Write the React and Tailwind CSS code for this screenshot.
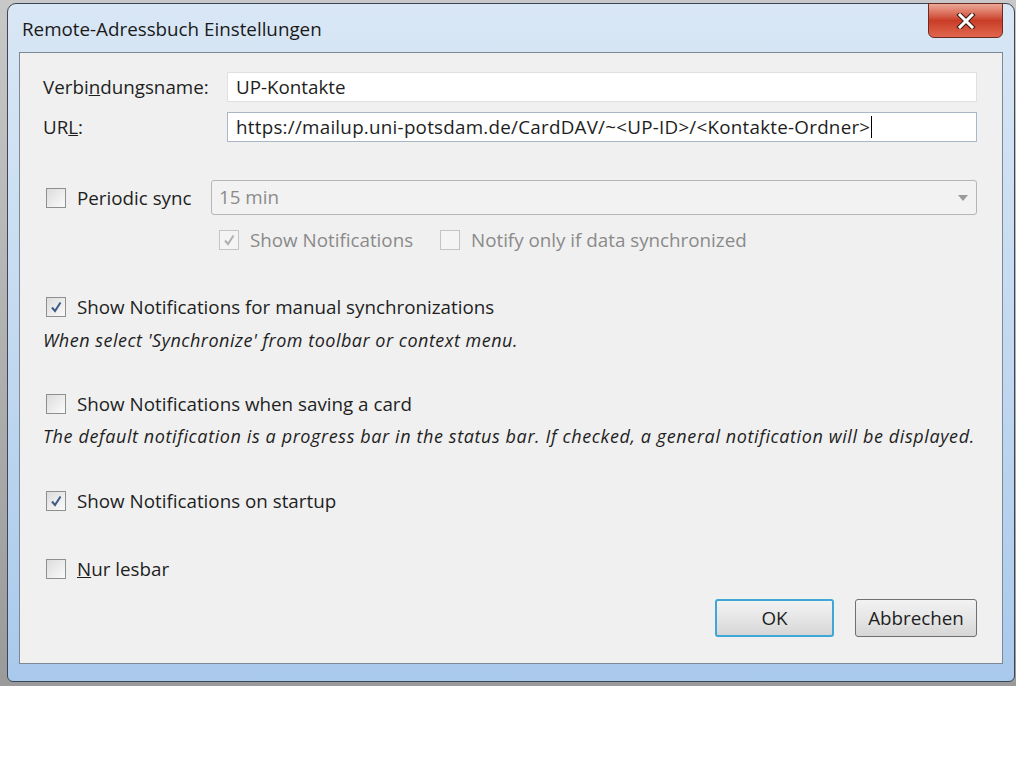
import React from 'react';

const font = { fontFamily: '"Open Sans", "Noto Sans", sans-serif' };

function Checkbox({ checked, disabled }) {
  return (
    <span
      className={`w-[20px] h-[20px] shrink-0 flex items-center justify-center border ${
        disabled ? 'border-[#c4c4c4] bg-[#f4f4f4]' : 'border-[#8e8f8f] bg-gradient-to-br from-[#dcdcdc] to-[#fbfbfb]'
      }`}
    >
      {checked && (
        <svg width="14" height="14" viewBox="0 0 14 14">
          <path
            d="M3 7.5 L6 11 L11.5 2.5"
            fill="none"
            stroke={disabled ? '#b0b0b0' : '#3f5a85'}
            strokeWidth="2"
          />
        </svg>
      )}
    </span>
  );
}

function CheckRow({ checked, disabled, children, className = '' }) {
  return (
    <div className={`flex items-center ${className}`}>
      <Checkbox checked={checked} disabled={disabled} />
      <span className={`ml-[11px] text-[18.8px] leading-[24px] ${disabled ? 'text-[#8a8a8a]' : 'text-[#1e1e1e]'}`}>
        {children}
      </span>
    </div>
  );
}

export default function App() {
  return (
    <div className="w-[1024px] h-[768px] bg-white" style={font}>
      <div className="w-[1016px] h-[686px] bg-gradient-to-b from-[#c8c8c8] to-[#9a9a9a] pl-[7px] pt-[3px]">
        <div className="w-[1008px] h-[679px] rounded-t-[9px] rounded-b-[6px] border border-[#3c4654] bg-gradient-to-b from-[#d9e7f5] via-[#c3d9f0] to-[#a9c9ec] flex flex-col px-[11px] pb-[17px] relative">
          {/* title bar */}
          <div className="h-[48px] flex items-center shrink-0">
            <span className="ml-[3px] mt-[3px] text-[18.8px] text-[#1a1a1a]">Remote-Adressbuch Einstellungen</span>
          </div>
          <div className="absolute top-[-1px] right-[11px] w-[75px] h-[35px] rounded-b-[6px] border border-[#6b2a22] bg-gradient-to-b from-[#eba898] via-[#c93c26] to-[#e0664d] flex items-center justify-center">
            <svg width="20" height="16" viewBox="0 0 20 16">
              <path d="M4 2 L16 14 M16 2 L4 14" stroke="#3a1a14" strokeWidth="5" strokeLinecap="square" />
              <path d="M4 2 L16 14 M16 2 L4 14" stroke="#ffffff" strokeWidth="3" strokeLinecap="square" />
            </svg>
          </div>

          {/* content panel */}
          <div className="flex-1 border border-[#7c8896] bg-[#f0f0f0] pl-[23px] pr-[25px] pt-[19px] flex flex-col">
            <div className="flex items-center h-[30px]">
              <span className="w-[184px] text-[18.8px] text-[#1e1e1e]">
                Verbi<span className="underline">n</span>dungsname:
              </span>
              <div className="flex-1 h-[30px] bg-white border border-[#e0e0e0] px-[8px] flex items-center text-[18.8px] text-[#1e1e1e]">
                UP-Kontakte
              </div>
            </div>
            <div className="flex items-center h-[30px] mt-[10px]">
              <span className="w-[184px] text-[18.8px] text-[#1e1e1e]">
                UR<span className="underline">L</span>:
              </span>
              <div className="flex-1 h-[30px] bg-white border border-[#a9b7c6] px-[8px] flex items-center text-[18.8px] tracking-[0.25px] text-[#1e1e1e]">
                https://mailup.uni-potsdam.de/CardDAV/~&lt;UP-ID&gt;/&lt;Kontakte-Ordner&gt;
                <span className="w-[1px] h-[22px] bg-black ml-[1px]" />
              </div>
            </div>

            <div className="flex items-center mt-[38px] pl-[3px]">
              <CheckRow className="w-[165px]">Periodic sync</CheckRow>
              <div className="flex-1 h-[35px] border border-[#b5b5b5] rounded-[3px] bg-[#f2f2f2] flex items-center pl-[7px] pr-[7px] text-[18.8px] text-[#8a8a8a]">
                <span className="flex-1">15 min</span>
                <svg width="12" height="8" viewBox="0 0 12 8">
                  <path d="M1 1 L11 1 L6 7 Z" fill="#9a9a9a" />
                </svg>
              </div>
            </div>
            <div className="flex items-center mt-[13px] pl-[176px]">
              <CheckRow checked disabled className="w-[221px]">Show Notifications</CheckRow>
              <CheckRow disabled>Notify only if data synchronized</CheckRow>
            </div>

            <CheckRow checked className="mt-[43px] pl-[3px]">Show Notifications for manual synchronizations</CheckRow>
            <div className="mt-[8px] italic text-[18px] tracking-[0.5px] text-[#1e1e1e]">
              When select 'Synchronize' from toolbar or context menu.
            </div>

            <CheckRow className="mt-[38px] pl-[3px]">Show Notifications when saving a card</CheckRow>
            <div className="mt-[7px] italic text-[18px] tracking-[0.6px] text-[#1e1e1e] whitespace-nowrap">
              The default notification is a progress bar in the status bar. If checked, a general notification will be displayed.
            </div>

            <CheckRow checked className="mt-[39px] pl-[3px]">Show Notifications on startup</CheckRow>

            <CheckRow className="mt-[44px] pl-[3px]">
              <span className="underline">N</span>ur lesbar
            </CheckRow>

            <div className="flex justify-end gap-[21px] mt-[18px]">
              <button className="w-[119px] h-[38px] rounded-[3px] border-2 border-[#3fa6d8] bg-gradient-to-b from-[#f2f2f2] via-[#e6e6e6] to-[#d6d6d6] text-[18.8px] text-[#1e1e1e]">
                OK
              </button>
              <button className="w-[122px] h-[38px] rounded-[3px] border border-[#707070] bg-gradient-to-b from-[#f2f2f2] via-[#e6e6e6] to-[#d6d6d6] text-[18.8px] text-[#1e1e1e]">
                Abbrechen
              </button>
            </div>
          </div>
        </div>
      </div>
    </div>
  );
}
